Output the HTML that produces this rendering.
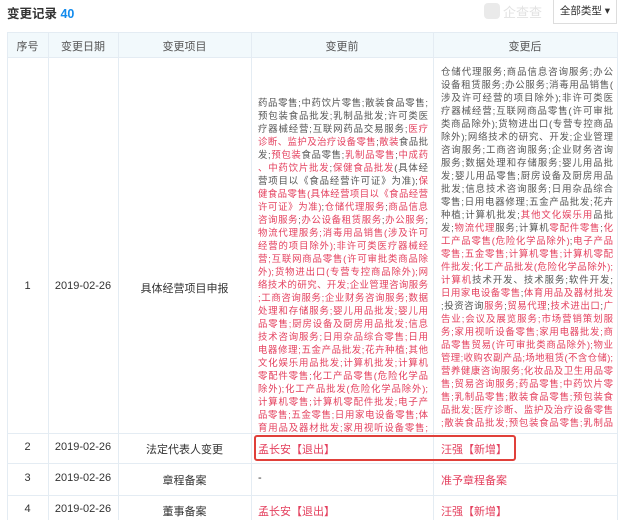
<!DOCTYPE html>
<html><head><meta charset="utf-8"><style>
*{margin:0;padding:0;box-sizing:border-box}
body{width:630px;height:520px;overflow:hidden;background:#fff;font-family:"Liberation Sans","Noto Sans CJK SC",sans-serif;color:#333;position:relative}
.a{position:absolute}
.hl{position:absolute;left:7px;width:610px;height:1px;background:#e4ecf3}
.vl{position:absolute;width:1px;background:#e4ecf3;top:32px;height:488px}
.c{position:absolute;font-size:11px;text-align:center;color:#333}
.txt{position:absolute;font-size:9.4px;line-height:13px;color:#555;overflow:hidden}
.txt div{height:13px;white-space:nowrap;text-align:justify;text-align-last:justify;text-justify:inter-character;overflow:hidden}
.r{color:#e4405e}
</style></head><body>
<div class="a" style="left:7px;top:3px;font-size:12.5px;font-weight:bold;color:#333">变更记录 <span style="color:#128bed">40</span></div>
<div class="a" style="left:484px;top:3px;width:16px;height:16px;border-radius:4px;background:#eaeaea"></div>
<div class="a" style="left:503px;top:2px;font-size:13px;color:#e2e2e2">企查查</div>
<div class="a" style="left:553px;top:0;width:64px;height:24px;border:1px solid #ddd;border-top:none;font-size:10.5px;line-height:22px;text-align:center;color:#333">全部类型 ▾</div>
<div class="a" style="left:7px;top:32px;width:610px;height:25px;background:#f2f9fc"></div>
<div class="hl" style="top:32px"></div><div class="hl" style="top:57px"></div>
<div class="hl" style="top:433px"></div><div class="hl" style="top:463px"></div><div class="hl" style="top:495px"></div>
<div class="vl" style="left:7px"></div><div class="vl" style="left:48px"></div><div class="vl" style="left:118px"></div><div class="vl" style="left:251px"></div><div class="vl" style="left:433px"></div><div class="vl" style="left:617px"></div>
<div class="c" style="left:7px;width:41px;top:38px;color:#555">序号</div>
<div class="c" style="left:48px;width:70px;top:38px;color:#555">变更日期</div>
<div class="c" style="left:118px;width:133px;top:38px;color:#555">变更项目</div>
<div class="c" style="left:251px;width:182px;top:38px;color:#555">变更前</div>
<div class="c" style="left:433px;width:184px;top:38px;color:#555">变更后</div>

<div class="c" style="left:7px;width:41px;top:280px">1</div>
<div class="c" style="left:48px;width:70px;top:280px">2019-02-26</div>
<div class="c" style="left:118px;width:133px;top:280px">具体经营项目申报</div>

<div class="txt" style="left:258px;top:96px;height:337px;width:170px">
<div>药品零售;中药饮片零售;散装食品零售;</div>
<div>预包装食品批发;乳制品批发;许可类医</div>
<div>疗器械经营;互联网药品交易服务;<span class="r">医疗</span></div>
<div><span class="r">诊断、监护及治疗设备零售</span>;<span class="r">散装</span>食品批</div>
<div>发;<span class="r">预包装</span>食品零售;<span class="r">乳制品零售</span>;<span class="r">中成药</span></div>
<div><span class="r">、中药饮片批发</span>;<span class="r">保健食品批发</span>(具体经</div>
<div>营项目以《食品经营许可证》为准);<span class="r">保</span></div>
<div class="r">健食品零售(具体经营项目以《食品经营</div>
<div><span class="r">许可证》为准)</span>;<span class="r">仓储代理服务</span>;<span class="r">商品信息</span></div>
<div><span class="r">咨询服务</span>;<span class="r">办公设备租赁服务</span>;<span class="r">办公服务</span>;</div>
<div class="r">物流代理服务;消毒用品销售(涉及许可</div>
<div class="r">经营的项目除外);非许可类医疗器械经</div>
<div class="r">营;互联网商品零售(许可审批类商品除</div>
<div class="r">外);货物进出口(专营专控商品除外);网</div>
<div class="r">络技术的研究、开发;企业管理咨询服务</div>
<div class="r">;工商咨询服务;企业财务咨询服务;数据</div>
<div class="r">处理和存储服务;婴儿用品批发;婴儿用</div>
<div class="r">品零售;厨房设备及厨房用品批发;信息</div>
<div class="r">技术咨询服务;日用杂品综合零售;日用</div>
<div class="r">电器修理;五金产品批发;花卉种植;其他</div>
<div class="r">文化娱乐用品批发;计算机批发;计算机</div>
<div class="r">零配件零售;化工产品零售(危险化学品</div>
<div class="r">除外);化工产品批发(危险化学品除外);</div>
<div class="r">计算机零售;计算机零配件批发;电子产</div>
<div class="r">品零售;五金零售;日用家电设备零售;体</div>
<div class="r">育用品及器材批发;家用视听设备零售;</div>
</div>

<div class="txt" style="left:441px;top:65px;height:368px;width:172px">
<div>仓储代理服务;商品信息咨询服务;办公</div>
<div>设备租赁服务;办公服务;消毒用品销售(</div>
<div>涉及许可经营的项目除外);非许可类医</div>
<div>疗器械经营;互联网商品零售(许可审批</div>
<div>类商品除外);货物进出口(专营专控商品</div>
<div>除外);网络技术的研究、开发;企业管理</div>
<div>咨询服务;工商咨询服务;企业财务咨询</div>
<div>服务;数据处理和存储服务;婴儿用品批</div>
<div>发;婴儿用品零售;厨房设备及厨房用品</div>
<div>批发;信息技术咨询服务;日用杂品综合</div>
<div>零售;日用电器修理;五金产品批发;花卉</div>
<div>种植;计算机批发;<span class="r">其他文化娱乐用</span>品批</div>
<div>发;<span class="r">物流代理</span>服务;计算机<span class="r">零配件零售</span>;<span class="r">化</span></div>
<div><span class="r">工产品零售(危险化学品除外)</span>;<span class="r">电子产品</span></div>
<div class="r">零售;五金零售;计算机零售;计算机零配</div>
<div class="r">件批发;化工产品批发(危险化学品除外);</div>
<div><span class="r">计算机</span>技术开发、技术服务;软件开发;</div>
<div><span class="r">日用家电设备零售</span>;<span class="r">体育用品及器材批发</span></div>
<div>;投资咨询<span class="r">服务</span>;<span class="r">贸易代理</span>;<span class="r">技术进出口</span>;<span class="r">广</span></div>
<div class="r">告业;会议及展览服务;市场营销策划服</div>
<div class="r">务;家用视听设备零售;家用电器批发;商</div>
<div class="r">品零售贸易(许可审批类商品除外);物业</div>
<div class="r">管理;收购农副产品;场地租赁(不含仓储);</div>
<div class="r">营养健康咨询服务;化妆品及卫生用品零</div>
<div class="r">售;贸易咨询服务;药品零售;中药饮片零</div>
<div class="r">售;乳制品零售;散装食品零售;预包装食</div>
<div class="r">品批发;医疗诊断、监护及治疗设备零售</div>
<div class="r">;散装食品批发;预包装食品零售;乳制品</div>
</div>

<div class="c" style="left:7px;width:41px;top:441px">2</div>
<div class="c" style="left:48px;width:70px;top:441px">2019-02-26</div>
<div class="c" style="left:118px;width:133px;top:441px">法定代表人变更</div>
<div class="a r" style="left:258px;top:441px;font-size:11px">孟长安【退出】</div>
<div class="a r" style="left:441px;top:441px;font-size:11px">汪强【新增】</div>
<div class="a" style="left:254px;top:435px;width:262px;height:26px;border:2px solid #e0403a;border-radius:3px"></div>

<div class="c" style="left:7px;width:41px;top:472px">3</div>
<div class="c" style="left:48px;width:70px;top:472px">2019-02-26</div>
<div class="c" style="left:118px;width:133px;top:472px">章程备案</div>
<div class="a" style="left:258px;top:472px;font-size:11px">-</div>
<div class="a r" style="left:441px;top:472px;font-size:11px">准予章程备案</div>

<div class="c" style="left:7px;width:41px;top:503px">4</div>
<div class="c" style="left:48px;width:70px;top:503px">2019-02-26</div>
<div class="c" style="left:118px;width:133px;top:503px">董事备案</div>
<div class="a r" style="left:258px;top:503px;font-size:11px">孟长安【退出】</div>
<div class="a r" style="left:441px;top:503px;font-size:11px">汪强【新增】</div>
</body></html>
